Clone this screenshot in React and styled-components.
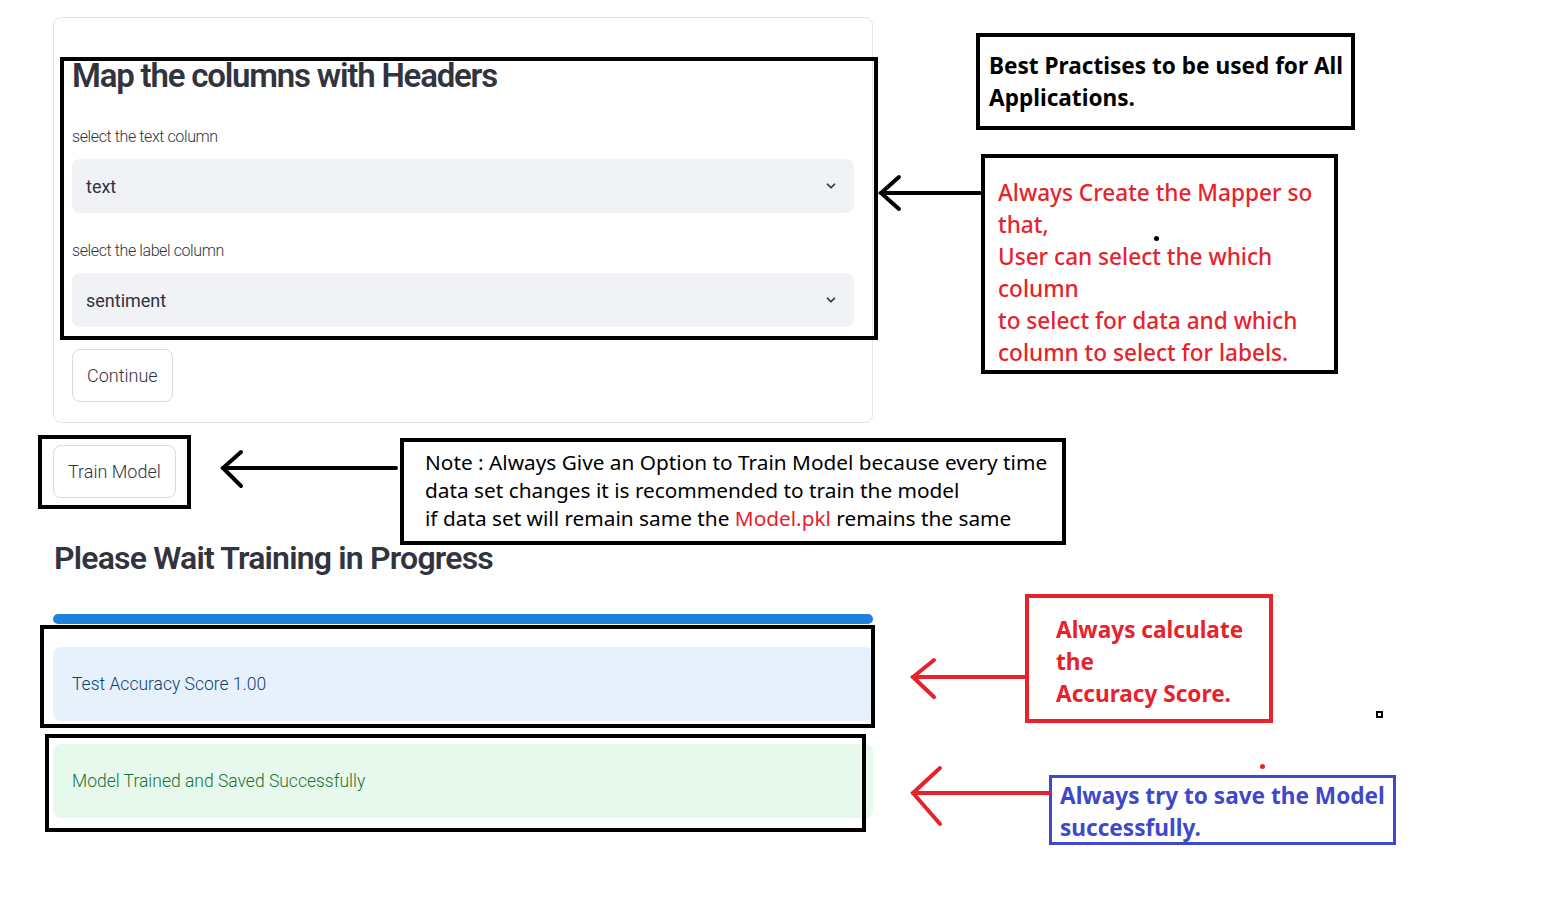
import React from 'react';
import styled, {createGlobalStyle} from 'styled-components';

const GlobalStyle = createGlobalStyle`
    body {
        margin: 0;
        background: #fff;
        font-family: Roboto, "Liberation Sans", sans-serif;
    }
`

const Page = styled.div`
    position: relative;
    width: 1553px;
    height: 911px;
    overflow: hidden;
`

const AppColumn = styled.main`
    width: 820px;
    padding-left: 53px;
    padding-top: 17px;
    display: flex;
    flex-direction: column;
    color: #31333F;
`

const FormCard = styled.section`
    border: 1px solid #e4e5e9;
    border-radius: 8px;
    padding: 39px 18px 20px 18px;
    display: flex;
    flex-direction: column;
`

const Heading = styled.h2`
    margin: 0;
    font-size: 33px;
    line-height: 38px;
    font-weight: 600;
    letter-spacing: -1.2px;
    color: #31333F;
`

const Label = styled.label`
    display: block;
    margin-top: ${({first}) => first ? '32px' : '28px'};
    font-size: 16px;
    line-height: 20px;
    letter-spacing: -0.4px;
    font-weight: 300;
`

const Select = styled.div`
    margin-top: 12px;
    height: 54px;
    background: #F0F2F6;
    border-radius: 8px;
    display: flex;
    align-items: center;
    justify-content: space-between;
    padding: 0 16px 0 14px;
    font-size: 18px;
    font-weight: 400;
`

const Button = styled.button`
    align-self: flex-start;
    margin-top: ${({top}) => top}px;
    height: 53px;
    padding: 0 ${({px}) => px}px;
    background: #fff;
    border: 1px solid #d9dbe0;
    border-radius: 8px;
    font-family: Roboto, "Liberation Sans", sans-serif;
    font-size: 18px;
    font-weight: 300;
    color: #31333F;
`

const SubHeading = styled.h2`
    margin: 40px 0 0 1px;
    font-size: 32px;
    line-height: 40px;
    font-weight: 600;
    letter-spacing: -0.8px;
    color: #31333F;
`

const Progress = styled.div`
    margin-top: 36px;
    height: 10px;
    border-radius: 6px;
    background: #1f80dd;
`

const Alert = styled.div`
    margin-top: 23px;
    height: 74px;
    border-radius: 8px;
    display: flex;
    align-items: center;
    padding-left: 19px;
    font-size: 17.5px;
    font-weight: 300;
    background: ${({kind}) => kind === 'success' ? '#e7f8ec' : '#e7f1fc'};
    color: ${({kind}) => kind === 'success' ? '#177233' : '#0b3f73'};
`

const Outline = styled.div`
    position: absolute;
    left: ${({x}) => x}px;
    top: ${({y}) => y}px;
    width: ${({w}) => w}px;
    height: ${({h}) => h}px;
    border: 4px solid #000;
    box-sizing: border-box;
    pointer-events: none;
`

const Note = styled.div`
    position: absolute;
    left: ${({x}) => x}px;
    top: ${({y}) => y}px;
    width: ${({w}) => w}px;
    height: ${({h}) => h}px;
    box-sizing: border-box;
    border: ${({bw}) => bw || 4}px solid ${({frame}) => frame || '#000'};
    background: #fff;
    padding: ${({pad}) => pad};
    font-family: "Noto Sans", "Open Sans", sans-serif;
    font-size: ${({size}) => size || 22.6}px;
    line-height: ${({lh}) => lh || 32}px;
    font-weight: ${({weight}) => weight || 700};
    color: ${({ink}) => ink || '#000'};
    white-space: nowrap;
`

const Line = styled.div``

const Red = styled.span`
    color: #e8222b;
`

const Dot = styled.span`
    position: absolute;
    left: ${({x}) => x}px;
    top: ${({y}) => y}px;
    width: ${({s}) => s}px;
    height: ${({s}) => s}px;
    border-radius: ${({square}) => square ? '0' : '50%'};
    background: ${({c}) => c};
    box-shadow: ${({square}) => square ? 'inset 0 0 0 2px #000' : 'none'};
`

const ArrowLayer = styled.svg`
    position: absolute;
    left: 0;
    top: 0;
    pointer-events: none;
`

const Chevron = () => (
    <svg width="14" height="14" viewBox="0 0 24 24" fill="none" stroke="#31333F" strokeWidth="3" strokeLinecap="round" strokeLinejoin="round">
        <path d="M6 9l6 6 6-6" />
    </svg>
)

const Arrow = ({x1, x2, y, headX, up, down, color}) => (
    <g stroke={color} strokeWidth="4" strokeLinecap="round" fill="none">
        <line x1={x1} y1={y} x2={x2} y2={y} />
        <polyline points={`${headX},${y - up} ${x1},${y} ${headX},${y + down}`} />
    </g>
)

export default function App() {
    return (
        <Page>
            <GlobalStyle />
            <AppColumn>
                <FormCard>
                    <Heading>Map the columns with Headers</Heading>
                    <Label first>select the text column</Label>
                    <Select><span>text</span><Chevron /></Select>
                    <Label>select the label column</Label>
                    <Select><span>sentiment</span><Chevron /></Select>
                    <Button top={22} px={14}>Continue</Button>
                </FormCard>
                <Button top={22} px={14}>Train Model</Button>
                <SubHeading>Please Wait Training in Progress</SubHeading>
                <Progress />
                <Alert>Test Accuracy Score 1.00</Alert>
                <Alert kind="success">Model Trained and Saved Successfully</Alert>
            </AppColumn>

            <Outline x={60} y={57} w={818} h={283} />
            <Outline x={38} y={435} w={153} h={74} />
            <Outline x={40} y={625} w={835} h={103} />
            <Outline x={45} y={734} w={821} h={98} />

            <Note x={976} y={33} w={379} h={97} pad="13px 0 0 9px">
                <Line>Best Practises to be used for All</Line>
                <Line>Applications.</Line>
            </Note>

            <Note x={981} y={154} w={357} h={220} pad="19px 0 0 13px" weight={500} ink="#e8222b">
                <Line>Always Create the Mapper so</Line>
                <Line>that,</Line>
                <Line>User can select the which</Line>
                <Line>column</Line>
                <Line>to select for data and which</Line>
                <Line>column to select for labels.</Line>
            </Note>

            <Note x={400} y={438} w={666} h={107} pad="6px 0 0 21px" size={20.8} lh={28} weight={400}>
                <Line>Note : Always Give an Option to Train Model because every time</Line>
                <Line>data set changes it is recommended to train the model</Line>
                <Line>if data set will remain same the <Red>Model.pkl</Red> remains the same</Line>
            </Note>

            <Note x={1025} y={594} w={248} h={129} frame="#e8222b" pad="16px 0 0 27px" ink="#e8222b">
                <Line>Always calculate</Line>
                <Line>the</Line>
                <Line>Accuracy Score.</Line>
            </Note>

            <Note x={1049} y={775} w={347} h={70} bw={3} frame="#3f48cc" pad="2px 0 0 8px" ink="#3f48cc">
                <Line>Always try to save the Model</Line>
                <Line>successfully.</Line>
            </Note>

            <ArrowLayer width="1553" height="911">
                <Arrow x1={881} x2={980} y={193} headX={899} up={16} down={16} color="#000" />
                <Arrow x1={223} x2={396} y={468} headX={241} up={16} down={18} color="#000" />
                <Arrow x1={913} x2={1025} y={677} headX={934} up={17} down={20} color="#e8222b" />
                <Arrow x1={913} x2={1050} y={793} headX={940} up={25} down={31} color="#e8222b" />
            </ArrowLayer>

            <Dot x={1154} y={236} s={5} c="#000" />
            <Dot x={1376} y={711} s={7} c="#fff" square />
            <Dot x={1260} y={764} s={5} c="#e8222b" />
        </Page>
    );
}
